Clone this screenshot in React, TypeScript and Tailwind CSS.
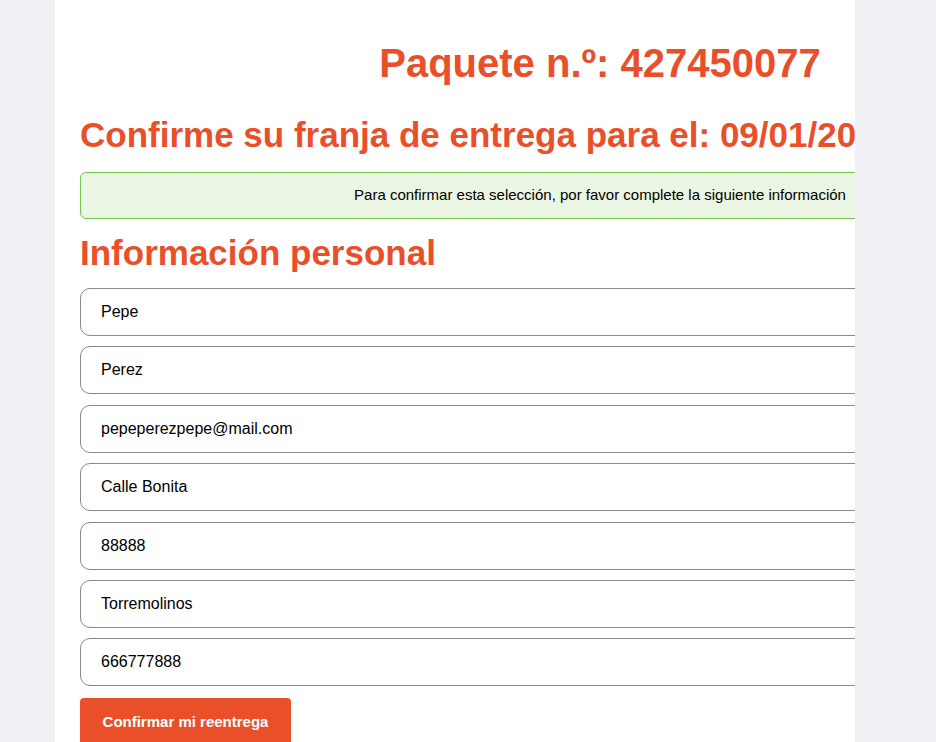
const fields = ["Pepe", "Perez", "pepeperezpepe@mail.com", "Calle Bonita", "88888", "Torremolinos", "666777888"];

export default function App() {
  return (
    <div className="min-h-screen bg-[#f0f1f5] font-['Liberation_Sans',Arial,sans-serif]">
      <div className="ml-[55px] w-[800px] min-h-screen overflow-hidden bg-white">
        <div className="w-[1040px] ml-[25px] pt-[40px]">
          <h1 className="text-center text-[40px] leading-[46px] font-bold text-[#e9502a]">
            Paquete n.º: 427450077
          </h1>
          <h2 className="mt-[29px] whitespace-nowrap text-[35px] leading-[40px] font-bold text-[#e9502a]">
            Confirme su franja de entrega para el: 09/01/2025
          </h2>
          <div className="mt-[17px] flex h-[47px] items-center justify-center rounded-[6px] border border-[#78c452] bg-[#eaf5e3] text-[15px] text-black">
            Para confirmar esta selección, por favor complete la siguiente información
          </div>
          <h3 className="mt-[14px] text-[35px] leading-[40px] font-bold text-[#e9502a]">
            Información personal
          </h3>
          <form className="mt-[15px] flex flex-col gap-[10.4px]">
            {fields.map((v) => (
              <input
                key={v}
                defaultValue={v}
                className="h-[48px] w-full rounded-[10px] border border-[#8a8a8a] px-5 text-base text-black outline-none"
              />
            ))}
            <button
              type="button"
              className="mt-[1px] h-[50px] w-[211px] rounded-[4px] bg-[#e9502a] text-[15px] font-bold text-white"
            >
              Confirmar mi reentrega
            </button>
          </form>
        </div>
      </div>
    </div>
  );
}
